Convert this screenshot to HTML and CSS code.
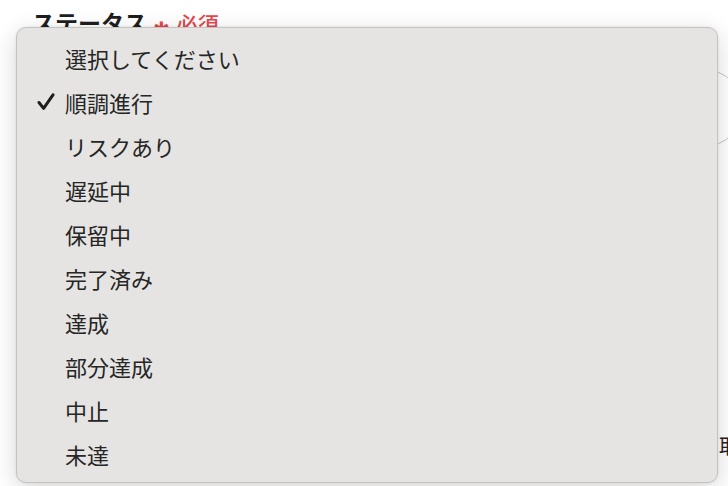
FILE: index.html
```html
<!DOCTYPE html>
<html lang="ja">
<head>
<meta charset="utf-8">
<link rel="stylesheet" href="styles.css">
</head>
<body>
<div class="page">
  <div class="field">
    <div class="label">ステータス<span class="req"><span class="star">✱</span>必須</span></div>
    <div class="select-box"></div>
  </div>
  <div class="below">
    <span class="cut">取</span>
  </div>

  <div class="menu">
    <div class="item"><span class="check"></span>選択してください</div>
    <div class="item"><span class="check"><svg width="18" height="18" viewBox="0 0 18 18"><path d="M2 9.5 L6.6 15.4 L16 1.8" fill="none" stroke="#1e1e1e" stroke-width="3" stroke-linecap="round" stroke-linejoin="round"/></svg></span>順調進行</div>
    <div class="item"><span class="check"></span>リスクあり</div>
    <div class="item"><span class="check"></span>遅延中</div>
    <div class="item"><span class="check"></span>保留中</div>
    <div class="item"><span class="check"></span>完了済み</div>
    <div class="item"><span class="check"></span>達成</div>
    <div class="item"><span class="check"></span>部分達成</div>
    <div class="item"><span class="check"></span>中止</div>
    <div class="item"><span class="check"></span>未達</div>
  </div>
</div>
</body>
</html>
```

FILE: styles.css
```css
html, body {
  margin: 0;
  padding: 0;
  background: #ffffff;
  overflow: hidden;
}
.page {
  position: relative;
  width: 728px;
  height: 486px;
  overflow: hidden;
  font-family: "Noto Sans CJK JP", "Noto Sans", sans-serif;
}
.field {
  padding: 11px 0 0 32px;
}
.label {
  font-size: 23px;
  line-height: 22px;
  font-weight: 700;
  color: #1e1e1e;
  display: flex;
  align-items: baseline;
}
.req {
  color: #e5464c;
  font-size: 21px;
  font-weight: 500;
  margin-left: 6px;
}
.star {
  font-family: "DejaVu Sans", sans-serif;
  font-size: 20px;
  vertical-align: -4px;
  margin-right: 7px;
}
.select-box {
  margin-top: 29px;
  margin-left: 560px;
  width: 151px;
  height: 78px;
  border: 1px solid #c4c4c4;
  border-radius: 39px;
  box-sizing: border-box;
}
.below {
  margin-top: 288px;
  padding-left: 719px;
  font-family: "Liberation Serif", "Noto Sans CJK JP", serif;
  font-size: 20px;
  line-height: 24px;
  color: #222;
  white-space: nowrap;
}
.menu {
  position: absolute;
  left: 16px;
  top: 27px;
  width: 702px;
  height: 456px;
  box-sizing: border-box;
  padding: 8px 0 8px 0;
  background: #e5e4e3;
  border: 1px solid #c4c3c2;
  border-radius: 10px;
  box-shadow: 0 6px 24px rgba(0,0,0,0.16), 0 0 3px rgba(0,0,0,0.08);
}
.item {
  height: 44px;
  display: flex;
  align-items: center;
  font-size: 22px;
  color: #262626;
}
.check {
  width: 48px;
  display: flex;
  box-sizing: border-box;
  padding-left: 20px;
}
```
